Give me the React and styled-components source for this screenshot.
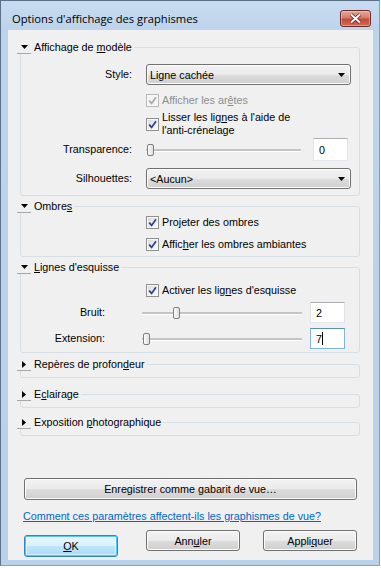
import styled, { createGlobalStyle } from "styled-components";

const GlobalStyle = createGlobalStyle`
  html, body {
    margin: 0;
    padding: 0;
    background: #ffffff;
  }
  body {
    font-family: "Liberation Sans", Arial, sans-serif;
    font-size: 10.75px;
    color: #000;
  }
  * {
    box-sizing: border-box;
  }
`;

const Window = styled.div`
  width: 380px;
  height: 566px;
  display: flex;
  flex-direction: column;
  background: linear-gradient(to bottom, #c8dcf1 0px, #bcd3eb 30px, #b9d1ea 100%);
  border-left: 1px solid #5d7189;
  border-top: 1px solid #5d7189;
  border-right: 1px solid #33c3ea;
  border-bottom: 1px solid #33c3ea;
`;

const TitleBar = styled.div`
  height: 29px;
  flex: none;
  display: flex;
  align-items: flex-start;
  padding: 9px 8px 0 11px;
`;

const Title = styled.span`
  font-family: "Open Sans", "Noto Sans", sans-serif;
  font-size: 11.2px;
  line-height: 17px;
  color: #000;
`;

const CloseButton = styled.button`
  margin-left: auto;
  width: 31px;
  height: 17px;
  padding: 0;
  display: flex;
  align-items: center;
  justify-content: center;
  border: 1px solid #6b2a26;
  border-radius: 3px;
  background: linear-gradient(to bottom, #e6a79c 0%, #d67b6d 45%, #c4493a 55%, #cf6b56 100%);
  box-shadow: inset 0 0 0 1px rgba(255, 210, 200, 0.45);
`;

const Client = styled.div`
  flex: 1;
  margin: 0 6px 5px 7px;
  background: #f0f0f0;
  display: flex;
  flex-direction: column;
`;

const Group = styled.fieldset`
  margin: ${(p) => p.$top}px 13px 0 12px;
  padding: 0 8px ${(p) => p.$bottom}px 0;
  border: 1px solid #d5dfe5;
  border-radius: 3px;
  min-width: 0;
`;

const Legend = styled.legend`
  display: flex;
  align-items: center;
  gap: 3px;
  margin-left: -4px;
  padding: 0 2px 0 0;
  background: #f0f0f0;
  line-height: 13px;
`;

const Expander = styled.span`
  width: 14px;
  height: 13px;
  display: flex;
  align-items: center;
  justify-content: center;
  background: #f0f0f0;
  border-bottom: 1px solid #a7a7a7;
`;

const Row = styled.div`
  display: flex;
  align-items: center;
  margin-top: ${(p) => p.$top}px;
  padding-left: ${(p) => p.$indent || 0}px;
`;

const Label = styled.span`
  flex: none;
  width: ${(p) => p.$width}px;
  margin-right: ${(p) => p.$gap}px;
  text-align: right;
  line-height: 13px;
`;

const CheckLabel = styled.label`
  display: flex;
  align-items: center;
  gap: 2px;
  line-height: 13px;
  color: ${(p) => (p.$disabled ? "#8d8d8d" : "#000")};
`;

const Box = styled.span`
  flex: none;
  width: 13px;
  height: 13px;
  margin-right: 1px;
  display: flex;
  align-items: center;
  justify-content: center;
  border: 1px solid ${(p) => (p.$disabled ? "#b8b8b8" : "#8e8f8f")};
  background: ${(p) =>
    p.$disabled
      ? "#f4f4f4"
      : "linear-gradient(135deg, #d4d7dc 0%, #eef0f2 60%, #fbfbfb 100%)"};
  box-shadow: inset 0 0 0 1px #f8f8f8;
`;

const Combo = styled.button`
  width: 205px;
  height: 21px;
  padding: 0 0 0 3px;
  display: flex;
  align-items: center;
  font: inherit;
  color: #000;
  text-align: left;
  border: 1px solid #707070;
  border-radius: 3px;
  background: linear-gradient(to bottom, #f2f2f2 0%, #ebebeb 50%, #dddddd 50%, #cfcfcf 100%);
  box-shadow: inset 0 0 0 1px #fcfcfc;

  svg {
    margin-left: auto;
    margin-right: 5px;
  }
`;

const Slider = styled.div`
  position: relative;
  flex: none;
  width: ${(p) => p.$width}px;
  height: 14px;

  &::before {
    content: "";
    position: absolute;
    left: 0;
    right: 0;
    top: 6px;
    height: 2px;
    background: #c4c4c4;
    border-bottom: 1px solid #ffffff;
  }
`;

const Thumb = styled.span`
  position: absolute;
  top: 1px;
  width: 7px;
  height: 12px;
  border: 1px solid #7f7f7f;
  border-radius: 2px;
  background: linear-gradient(to right, #fbfbfb, #dedede);
`;

const TextBox = styled.div`
  flex: none;
  width: 35px;
  height: ${(p) => p.$height || 21}px;
  margin-left: ${(p) => p.$gap}px;
  padding-left: 5px;
  display: flex;
  align-items: center;
  background: #ffffff;
  border: 1px solid ${(p) => (p.$focused ? "#5a8fbf" : "#abadb3")};
  border-left-color: ${(p) => (p.$focused ? "#7eb4ea" : "#e2e3ea")};
  border-right-color: ${(p) => (p.$focused ? "#7eb4ea" : "#e2e3ea")};
  border-bottom-color: ${(p) => (p.$focused ? "#7eb4ea" : "#e3e9ef")};
`;

const Caret = styled.span`
  width: 1px;
  height: 13px;
  background: #000;
`;

const Footer = styled.div`
  margin-top: auto;
  padding: 0 15px 3px 15px;
  display: flex;
  flex-direction: column;
  align-items: flex-start;
`;

const Button = styled.button`
  width: ${(p) => p.$width || 94}px;
  height: ${(p) => (p.$default ? 22 : 21)}px;
  margin-left: ${(p) => p.$left || 0}px;
  margin-top: ${(p) => (p.$default ? 5 : 0)}px;
  padding: 0;
  font: inherit;
  color: #000;
  border: 1px solid ${(p) => (p.$default ? "#2b87c8" : "#707070")};
  border-radius: 3px;
  background: ${(p) =>
    p.$default
      ? "linear-gradient(to bottom, #eaf6fd 0%, #d9f0fc 50%, #bee6fd 50%, #a9dbf6 100%)"
      : "linear-gradient(to bottom, #f2f2f2 0%, #ebebeb 50%, #dddddd 50%, #cfcfcf 100%)"};
  box-shadow: ${(p) =>
    p.$default
      ? "inset 0 0 0 1px #55c8f2, inset 0 0 0 2px rgba(255,255,255,0.5)"
      : "inset 0 0 0 1px #fcfcfc"};
`;

const ButtonRow = styled.div`
  display: flex;
  align-items: flex-start;
  margin-top: 7px;
`;

const HelpLink = styled.a`
  margin-top: 10px;
  line-height: 13px;
  color: #0066cc;
  text-decoration: underline;
`;

const Arrow = ({ open }) =>
  open ? (
    <svg width="7" height="4" viewBox="0 0 7 4">
      <path d="M0 0 H7 L3.5 4 Z" fill="#000" />
    </svg>
  ) : (
    <svg width="4" height="7" viewBox="0 0 4 7">
      <path d="M0 0 V7 L4 3.5 Z" fill="#000" />
    </svg>
  );

const Section = ({ title, open = true, top, bottom, children }) => (
  <Group $top={top} $bottom={bottom}>
    <Legend>
      <Expander>
        <Arrow open={open} />
      </Expander>
      <span>{title}</span>
    </Legend>
    {children}
  </Group>
);

const CheckBox = ({ checked, disabled, children }) => (
  <CheckLabel $disabled={disabled}>
    <Box $disabled={disabled}>
      {checked && (
        <svg width="9" height="9" viewBox="0 0 9 9">
          <path
            d="M1.2 4.6 L3.6 7.4 L8 1.2"
            fill="none"
            stroke={disabled ? "#a9a9a9" : "#2c3f8f"}
            strokeWidth="1.7"
          />
        </svg>
      )}
    </Box>
    <span>{children}</span>
  </CheckLabel>
);

const Dropdown = ({ value }) => (
  <Combo>
    {value}
    <svg width="7" height="4" viewBox="0 0 7 4">
      <path d="M0 0 H7 L3.5 4 Z" fill="#000" />
    </svg>
  </Combo>
);

const TrackBar = ({ width, value, max }) => (
  <Slider $width={width}>
    <Thumb style={{ left: Math.round(1 + (value / max) * (width - 9)) }} />
  </Slider>
);

export default function App() {
  return (
    <>
      <GlobalStyle />
      <Window>
        <TitleBar>
          <Title>Options d'affichage des graphismes</Title>
          <CloseButton aria-label="Fermer">
            <svg width="13" height="11" viewBox="0 0 13 11">
              <path d="M2 1.5 L11 9.5 M11 1.5 L2 9.5" stroke="#5a2320" strokeWidth="3.6" />
              <path d="M2 1.5 L11 9.5 M11 1.5 L2 9.5" stroke="#ffffff" strokeWidth="2" />
            </svg>
          </CloseButton>
        </TitleBar>
        <Client>
          <Section
            top={11}
            bottom={6}
            title={
              <>
                Affichage de <u>m</u>odèle
              </>
            }
          >
            <Row $top={10}>
              <Label $width={111} $gap={14}>
                Style:
              </Label>
              <Dropdown value="Ligne cachée" />
            </Row>
            <Row $top={9} $indent={125}>
              <CheckBox checked disabled>
                Afficher les ar<u>ê</u>tes
              </CheckBox>
            </Row>
            <Row $top={4} $indent={125}>
              <CheckBox checked>
                Lisser les lig<u>n</u>es à l'aide de
                <br />
                l'anti-crénelage
              </CheckBox>
            </Row>
            <Row $top={1}>
              <Label $width={111} $gap={14}>
                Transparence:
              </Label>
              <TrackBar width={155} value={0} max={10} />
              <TextBox $gap={12} $height={23}>
                0
              </TextBox>
            </Row>
            <Row $top={7}>
              <Label $width={111} $gap={14}>
                Silhouettes:
              </Label>
              <Dropdown value="<Aucun>" />
            </Row>
          </Section>

          <Section
            top={4}
            bottom={5}
            title={
              <>
                Ombre<u>s</u>
              </>
            }
          >
            <Row $top={3} $indent={125}>
              <CheckBox checked>
                Pro<u>j</u>eter des ombres
              </CheckBox>
            </Row>
            <Row $top={9} $indent={125}>
              <CheckBox checked>
                Affic<u>h</u>er les ombres ambiantes
              </CheckBox>
            </Row>
          </Section>

          <Section
            top={4}
            bottom={3}
            title={
              <>
                <u>L</u>ignes d'esquisse
              </>
            }
          >
            <Row $top={10} $indent={125}>
              <CheckBox checked>
                Activer les lig<u>n</u>es d'esquisse
              </CheckBox>
            </Row>
            <Row $top={5}>
              <Label $width={84} $gap={37}>
                Bruit:
              </Label>
              <TrackBar width={160} value={2} max={10} />
              <TextBox $gap={8}>2</TextBox>
            </Row>
            <Row $top={5}>
              <Label $width={84} $gap={37}>
                Extension:
              </Label>
              <TrackBar width={160} value={0} max={10} />
              <TextBox $gap={8} $focused>
                7
                <Caret />
              </TextBox>
            </Row>
          </Section>

          <Section
            top={5}
            bottom={6}
            open={false}
            title={
              <>
                Repères de profon<u>d</u>eur
              </>
            }
          />
          <Section
            top={10}
            bottom={6}
            open={false}
            title={
              <>
                E<u>c</u>lairage
              </>
            }
          />
          <Section
            top={8}
            bottom={6}
            open={false}
            title={
              <>
                Exposition <u>p</u>hotographique
              </>
            }
          />

          <Footer>
            <Button $width={333} $left={1} style={{ height: 22 }}>
              Enregistrer comme gabarit de vue…
            </Button>
            <HelpLink href="#">
              Comment ces paramètres affectent-ils les graphismes de vue?
            </HelpLink>
            <ButtonRow>
              <Button $default $left={1}>
                <u>O</u>K
              </Button>
              <Button $left={28}>
                Ann<u>u</u>ler
              </Button>
              <Button $left={23}>
                Appli<u>q</u>uer
              </Button>
            </ButtonRow>
          </Footer>
        </Client>
      </Window>
    </>
  );
}
